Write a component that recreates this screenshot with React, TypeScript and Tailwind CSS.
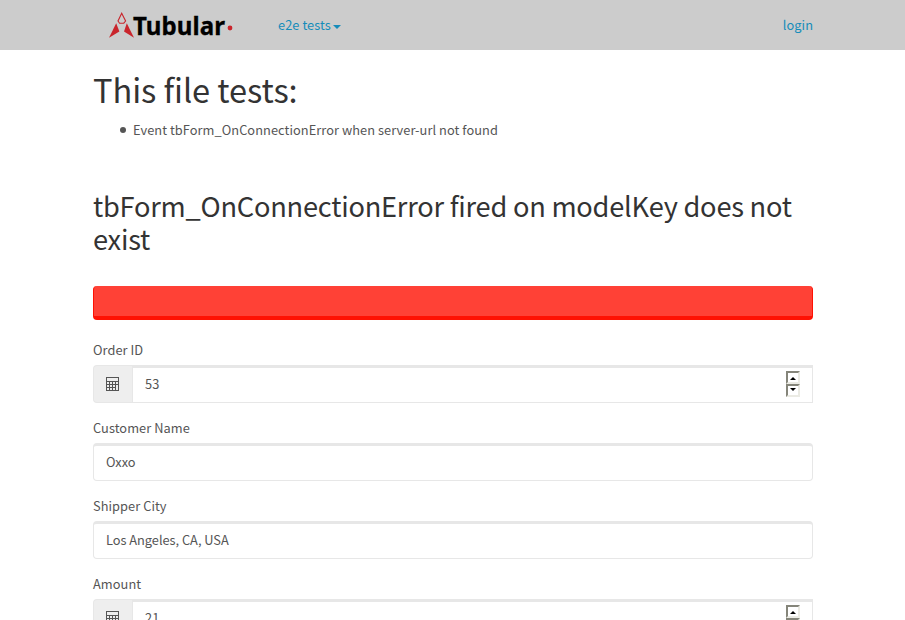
import type { ReactNode } from "react";

function Logo() {
  return (
    <svg width="126" height="40" viewBox="0 -6 126 40" className="block">
      <path d="M13.7 3.2 L17.6 11 L15.8 13.2 H11.6 L10 11 Z" fill="none" stroke="#c9252c" strokeWidth="1.1" />
      <path d="M8.2 13.2 L11.4 21.6 L1 27.8 Z" fill="#c9252c" />
      <path d="M18.8 13.2 L16 21.6 L26 27.8 Z" fill="#c9252c" />
      <text
        x="25"
        y="24.7"
        textLength="92"
        lengthAdjust="spacingAndGlyphs"
        fill="#000"
        stroke="#000"
        strokeWidth="0.3"
        className="font-['Noto_Sans',sans-serif] text-[25.5px] font-bold"
      >
        Tubular
      </text>
      <circle cx="122" cy="18" r="2.4" fill="#c9252c" />
    </svg>
  );
}

function Calculator() {
  return (
    <svg width="13" height="14" viewBox="0 0 13 14" shapeRendering="crispEdges" className="block">
      <path
        fill="#555"
        fillRule="evenodd"
        d="M0 0H13V14H0Z M1 1V4H12V1Z M1 5V7H3V5Z M4 5V7H6V5Z M7 5V7H9V5Z M10 5V7H12V5Z M1 8V10H3V8Z M4 8V10H6V8Z M7 8V10H9V8Z M1 11V13H3V11Z M4 11V13H6V11Z M7 11V13H9V11Z M10 8V13H12V8Z"
      />
    </svg>
  );
}

function SpinButton({ down = false }: { down?: boolean }) {
  return (
    <div className="flex h-[13px] w-[14px] items-center justify-center border-2 border-t-[#85857a] border-r-[#ebebe4] border-b-[#ebebe4] border-l-[#85857a] bg-white">
      <svg width="6" height="3" viewBox="0 0 6 3" className={down ? "mb-[3px] block" : "mt-px block"}>
        <path d={down ? "M0 0H6L3 3Z" : "M0 3H6L3 0Z"} fill="#000" />
      </svg>
    </div>
  );
}

function Field({ label, children }: { label: string; children: ReactNode }) {
  return (
    <div className="mb-[15px]">
      <div className="mb-[5px] h-5">{label}</div>
      {children}
    </div>
  );
}

function TextBox({ value }: { value: string }) {
  return (
    <div className="h-[38px] rounded border border-t-[3px] border-[#e7e7e7] px-3 py-[6px] tracking-[-0.02px]">
      {value}
    </div>
  );
}

function NumberBox({ value }: { value: string }) {
  return (
    <div className="flex h-[38px]">
      <div className="flex w-[39px] items-center rounded-l border border-r-0 border-[#e7e7e7] bg-[#eee] pl-3">
        <Calculator />
      </div>
      <div className="flex flex-1 justify-between border border-t-[3px] border-[#e7e7e7] pr-3 pl-3">
        <span className="pt-[6px]">{value}</span>
        <div className="pt-[3px]">
          <SpinButton />
          <SpinButton down />
        </div>
      </div>
    </div>
  );
}

export default function App() {
  return (
    <div className="h-[620px] overflow-hidden bg-white font-['Noto_Sans_CJK_SC',sans-serif] text-[12.8px] leading-5 tracking-[0.06px] text-[#555]">
      <nav className="h-[50px] bg-[#ccc] text-[#158cba]">
        <div className="mx-auto flex w-[751px] items-start pr-[15px] pl-4">
          <div className="w-[170px] pt-1 pl-[14.5px]">
            <Logo />
          </div>
          <div className="flex items-center pt-[15px] pl-[15px]">
            e2e tests
            <span className="mt-[3px] ml-[2px] border-x-4 border-t-4 border-x-transparent border-t-[#158cba]" />
          </div>
          <div className="ml-auto pt-[15px]">login</div>
        </div>
      </nav>
      <main className="mx-auto w-[751px] pt-[19px] pr-[15px] pl-4">
        <h1 className="mb-[11px] h-10 text-[32.6px] leading-[39.6px] tracking-[-0.06px] text-[#333]">
          This file tests:
        </h1>
        <ul className="mb-[49px] pl-[27px]">
          <li className="flex items-center">
            <span className="mr-[7px] size-[6px] rounded-full bg-[#555]" />
            Event tbForm_OnConnectionError when server-url not found
          </li>
        </ul>
        <h2 className="h-[66px] text-[27.2px] leading-[33px] tracking-[-0.22px] text-[#333]">
          tbForm_OnConnectionError fired on modelKey does not exist
        </h2>
        <div className="mt-[31px] mb-5 h-[34px] rounded border border-t-0 border-b-4 border-[#ff1103] bg-[#ff4136]" />
        <Field label="Order ID">
          <NumberBox value="53" />
        </Field>
        <Field label="Customer Name">
          <TextBox value="Oxxo" />
        </Field>
        <Field label="Shipper City">
          <TextBox value="Los Angeles, CA, USA" />
        </Field>
        <Field label="Amount">
          <NumberBox value="21" />
        </Field>
      </main>
    </div>
  );
}
